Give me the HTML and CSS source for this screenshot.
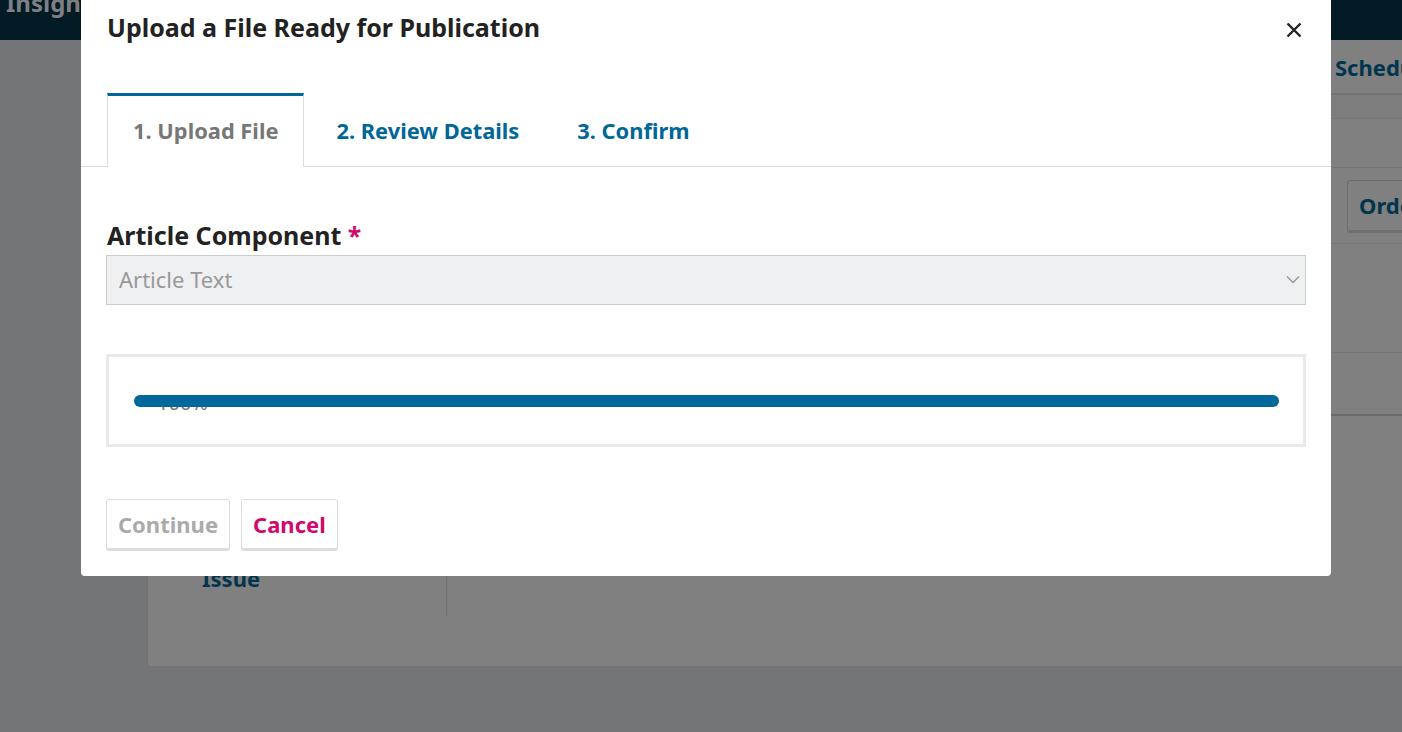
FILE: index.html
```html
<!DOCTYPE html>
<html lang="en">
<head>
<meta charset="utf-8">
<title>Upload a File Ready for Publication</title>
<link rel="stylesheet" href="styles.css">
</head>
<body>
<div class="page">
  <header class="topbar"><span class="brand">Insights</span></header>
  <div class="workspace">
    <div class="card">
      <div class="card-head"><span class="head-btn">Schedule For Publication</span></div>
      <div class="row row-thin"></div>
      <div class="row row-a"></div>
      <div class="row row-b"><span class="bg-btn">Order</span></div>
      <div class="row row-c"></div>
      <div class="row row-d"></div>
      <div class="card-body">
        <nav class="side"><span class="side-link">Issue</span></nav>
        <div class="main"></div>
      </div>
    </div>
  </div>
</div>

<div class="modal">
  <div class="modal-head">
    <h2 class="modal-title">Upload a File Ready for Publication</h2>
    <button class="close" aria-label="Close">
      <svg width="16" height="16" viewBox="0 0 16 16"><path d="M1.5 1.5 L14.5 14.5 M14.5 1.5 L1.5 14.5" stroke="#222" stroke-width="2.4" stroke-linecap="butt" fill="none"/></svg>
    </button>
  </div>
  <div class="tabs">
    <div class="tab active">1. Upload File</div>
    <div class="tab">2. Review Details</div>
    <div class="tab">3. Confirm</div>
  </div>
  <div class="modal-body">
    <label class="field-label">Article Component <span class="req">*</span></label>
    <div class="select">
      <span>Article Text</span>
      <svg class="chev" width="14" height="9" viewBox="0 0 14 9"><path d="M1 1.5 L7 7.5 L13 1.5" stroke="#999" stroke-width="1.5" fill="none"/></svg>
    </div>
    <div class="upload">
      <div class="progress">
        <span class="pct">100%</span>
        <div class="bar"></div>
      </div>
    </div>
    <div class="actions">
      <button class="btn disabled">Continue</button>
      <button class="btn cancel">Cancel</button>
    </div>
  </div>
</div>
</body>
</html>
```

FILE: styles.css
```css
html, body {
  margin: 0;
  padding: 0;
}
body {
  background: #747578;
  font-family: "Noto Sans", "Open Sans", sans-serif;
  width: 1402px;
  height: 732px;
  overflow: hidden;
  position: relative;
}

/* ---------- dimmed background page ---------- */
.topbar {
  height: 40px;
  background: #011a24;
  overflow: hidden;
}
.brand {
  display: block;
  margin: -12px 0 0 6px;
  font-size: 24px;
  font-weight: 700;
  color: #7e8083;
  line-height: 30px;
}
.workspace {
  padding-left: 147px;
}
.card {
  width: 1400px;
  height: 626px;
  background: #808080;
  border: 1px solid #727272;
  border-top: none;
  border-radius: 0 0 3px 3px;
  display: flex;
  flex-direction: column;
}
.card-head {
  height: 53px;
  border-bottom: 2px solid #727272;
  display: flex;
  align-items: center;
  padding-left: 1187px;
}
.head-btn {
  font-size: 22px;
  font-weight: 700;
  color: #00354d;
  white-space: nowrap;
}
.row {
  border-bottom: 1px solid #767676;
}
.row-thin { height: 23px; background: #7d7d7d; }
.row-a { height: 48px; }
.row-b {
  height: 75px;
  display: flex;
  align-items: center;
  padding-left: 1199px;
}
.bg-btn {
  display: inline-block;
  padding: 0 11px;
  height: 49px;
  line-height: 49px;
  border: 1px solid #6d6d6d;
  border-radius: 3px;
  box-shadow: 0 2px 0 #707070;
  font-size: 22px;
  font-weight: 700;
  color: #00354d;
  white-space: nowrap;
}
.row-c { height: 108px; }
.row-d { height: 61px; border-bottom: 2px solid #6a6a6a; }
.card-body {
  flex: 1;
  display: flex;
  align-items: flex-start;
}
.side {
  width: 298px;
  height: 200px;
  border-right: 1px solid #727272;
  display: flex;
  flex-direction: column;
  justify-content: flex-end;
}
.side-link {
  display: block;
  padding: 0 0 23px 54px;
  font-size: 22px;
  font-weight: 700;
  color: #00354d;
  line-height: 30px;
}

/* ---------- modal ---------- */
.modal {
  position: absolute;
  left: 81px;
  top: 0;
  width: 1250px;
  height: 576px;
  background: #fff;
  border-radius: 0 0 4px 4px;
  box-sizing: border-box;
}
.modal-head {
  height: 93px;
  display: flex;
  justify-content: space-between;
  align-items: flex-start;
  padding: 9px 29px 0 26px;
  box-sizing: border-box;
}
.modal-title {
  margin: 0;
  font-size: 25px;
  line-height: 36px;
  font-weight: 700;
  color: #222;
}
.close {
  margin-top: 13px;
  width: 16px;
  height: 16px;
  padding: 0;
  border: none;
  background: none;
  display: flex;
}
.tabs {
  display: flex;
  gap: 6px;
  padding-left: 26px;
  border-bottom: 1px solid #ddd;
  height: 74px;
  box-sizing: border-box;
}
.tab {
  padding: 0 25px 3px 25px;
  height: 74px;
  box-sizing: border-box;
  border-top: 3px solid transparent;
  border-left: 1px solid transparent;
  border-right: 1px solid transparent;
  display: flex;
  align-items: center;
  font-size: 21.85px;
  font-weight: 700;
  color: #006798;
}
.tab.active {
  border-top-color: #006798;
  border-left-color: #ddd;
  border-right-color: #ddd;
  background: #fff;
  color: #777;
  margin-bottom: -1px;
}
.modal-body {
  padding: 52px 25px 25px 25px;
  display: flex;
  flex-direction: column;
}
.field-label {
  display: block;
  font-size: 25px;
  line-height: 32px;
  font-weight: 700;
  color: #222;
  padding-left: 1px;
}
.req {
  color: #d00a6c;
}
.select {
  margin-top: 4px;
  height: 50px;
  box-sizing: border-box;
  border: 1px solid #ccc;
  background: #eff0f2;
  display: flex;
  align-items: center;
  justify-content: space-between;
  padding: 0 5px 2px 12px;
  font-size: 22px;
  color: #999;
}
.upload {
  margin-top: 49px;
  height: 93px;
  box-sizing: border-box;
  border: 3px solid #e8eaea;
  display: flex;
  align-items: center;
  padding: 0 24px 0 25px;
}
.progress {
  position: relative;
  flex: 1;
  height: 12px;
}
.pct {
  position: absolute;
  left: 23px;
  top: -4px;
  font-size: 20px;
  line-height: 24px;
  color: #777;
}
.bar {
  position: relative;
  height: 12px;
  border-radius: 6px;
  background: #00689a;
}
.actions {
  margin-top: 52px;
  display: flex;
  gap: 11px;
}
.btn {
  height: 50px;
  padding: 0 11px;
  border: 1px solid #ddd;
  border-radius: 3px;
  box-shadow: 0 2px 0 #ddd;
  background: #fff;
  font-family: inherit;
  font-size: 22px;
  font-weight: 700;
}
.btn.disabled { color: #aaa; }
.btn.cancel { color: #d00a6c; }
```
